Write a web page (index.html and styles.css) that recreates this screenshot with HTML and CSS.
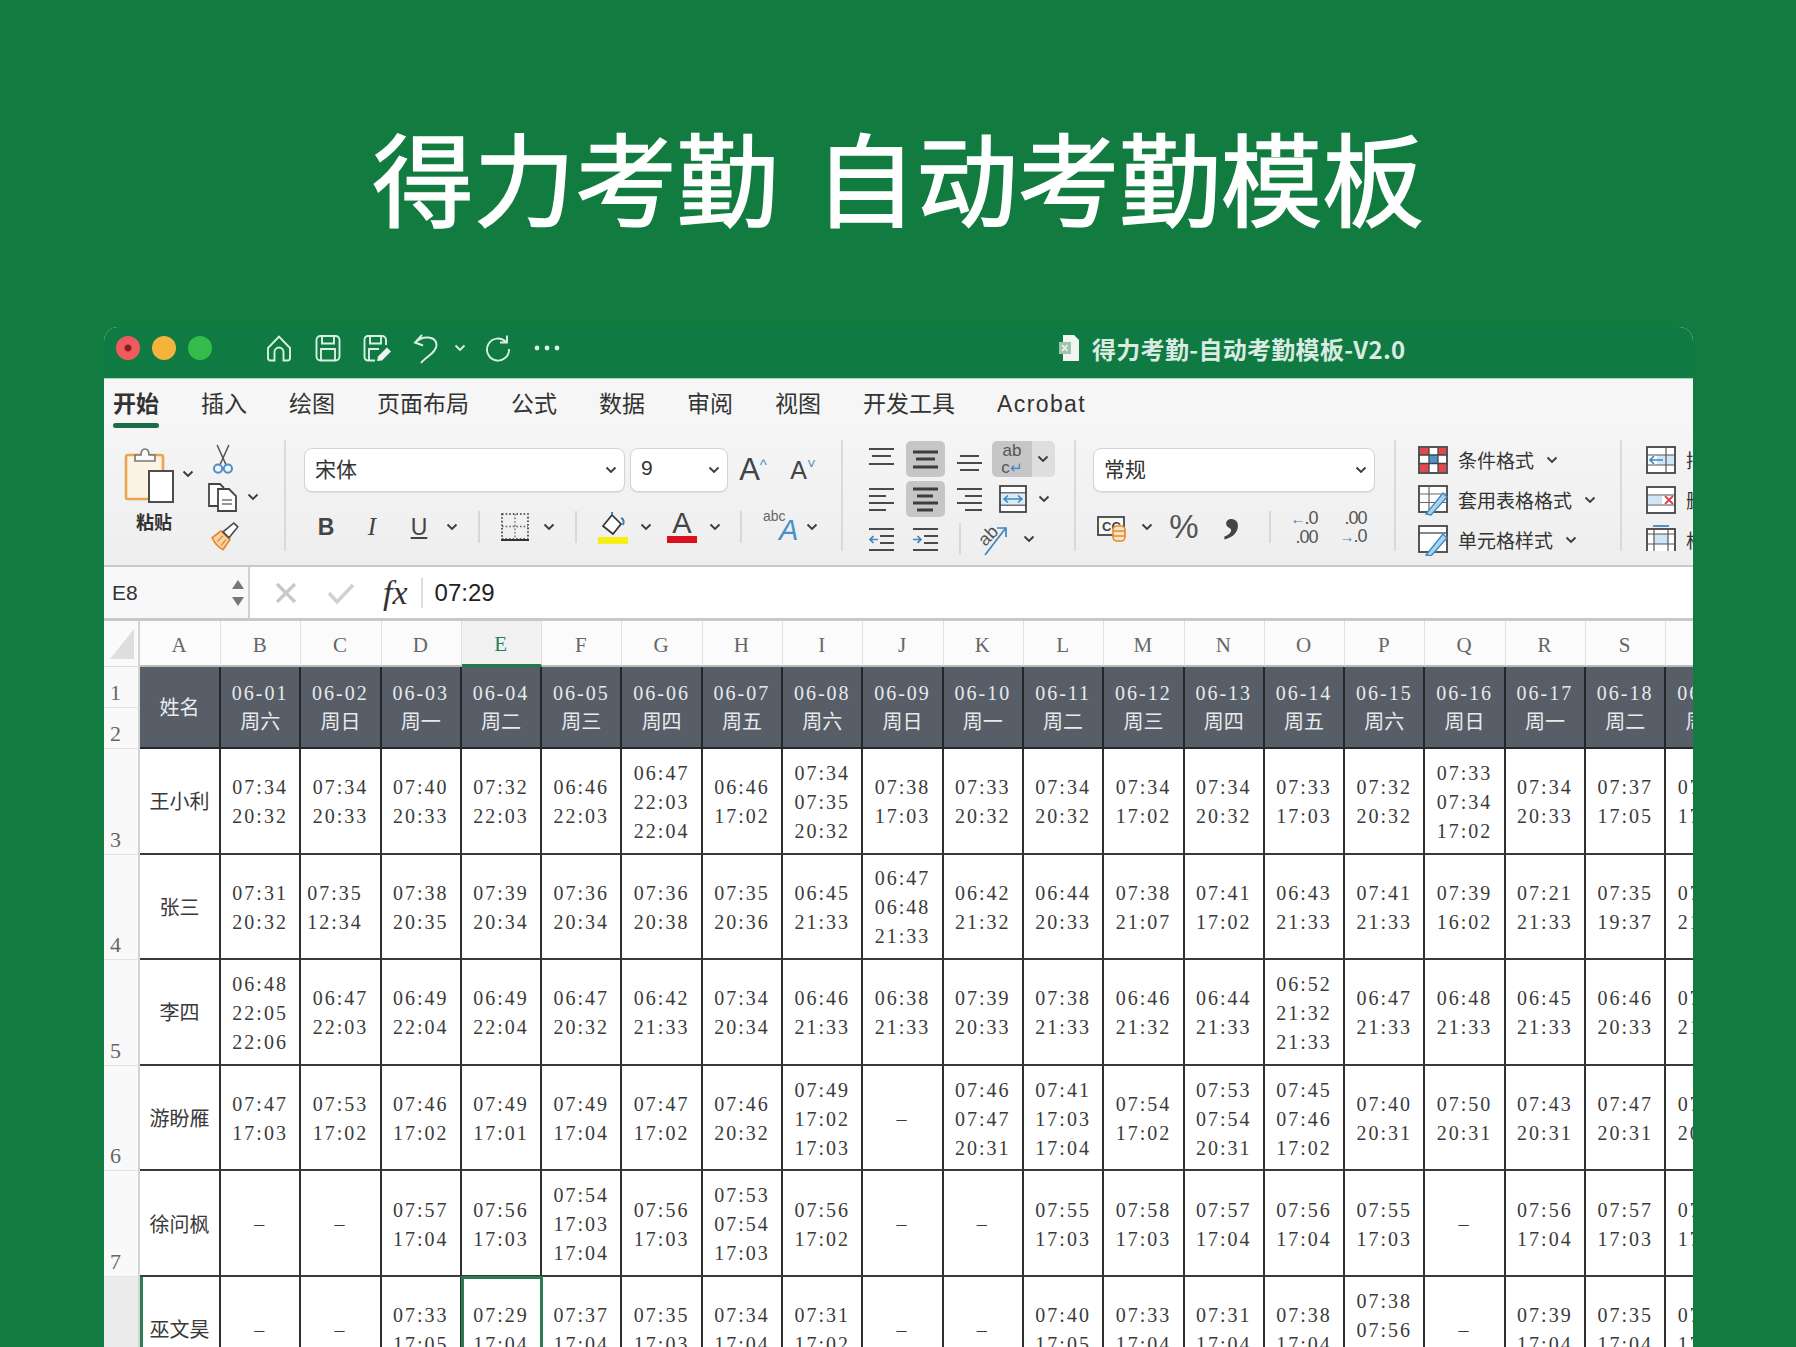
FILE: index.html
```html
<!DOCTYPE html>
<html lang="zh-CN">
<head>
  <meta charset="UTF-8">
  <title>得力考勤 自动考勤模板</title>
  <link rel="stylesheet" href="styles.css">
</head>
<body>

  <h1 class="headline">得力考勤 自动考勤模板</h1>

  <!-- shared small icons -->
  <svg class="sprite" width="0" height="0">
    <symbol id="chev" viewBox="0 0 12 8"><path d="M1.5 1.5 L6 6 L10.5 1.5" fill="none" stroke="#3c3c3c" stroke-width="1.9"/></symbol>
  </svg>

  <div class="window">

    <div class="titlebar">
      <div class="lights">
        <span class="light red"></span>
        <span class="light amber"></span>
        <span class="light green"></span>
      </div>
      <div class="quick">
        <svg width="28" height="30" viewBox="0 0 28 30"><path d="M3 15 L14 3.5 L25 15 V25 a2.5 2.5 0 0 1-2.500 2.500 H18.500 V19 a4.500 4.500 0 0 0-9 0 V27.500 H5.500 a2.500 2.500 0 0 1-2.500-2.500 Z"/></svg>
        <svg width="28" height="30" viewBox="0 0 28 30"><rect x="2.500" y="3" width="23" height="24.500" rx="4"/><path d="M8 3 V10.500 H20 V3 M7 27.500 V16 H21 V27.500"/></svg>
        <svg width="30" height="30" viewBox="0 0 30 30"><path d="M13 27.500 H6 a3.500 3.500 0 0 1-3.500-3.500 V6.500 A3.500 3.500 0 0 1 6 3 H20 a4 4 0 0 1 4 4 V12 M8 3 V10.500 H19 V3 M7 27.500 V16 H17"/><path class="solid" d="M15 28 L16 23.500 L25 14.500 L29 18.500 L20 27.500 Z"/></svg>
        <svg width="28" height="32" viewBox="0 0 28 32"><path d="M10 3 L3 10.500 L11 13.500 M3 10.500 C11 3 24 4 24.500 13 C25 20 14 25 9 31"/></svg>
        <svg class="quick-chev" width="12" height="8" viewBox="0 0 12 8"><path d="M1.500 1.500 L6 6 L10.500 1.500"/></svg>
        <svg width="28" height="30" viewBox="0 0 28 30"><path d="M22 9 A11 11 0 1 0 25 16 M23 2.500 V9.500 H16"/></svg>
        <svg class="dots" width="26" height="6" viewBox="0 0 26 6"><circle cx="3" cy="3" r="2.400"/><circle cx="13" cy="3" r="2.400"/><circle cx="23" cy="3" r="2.400"/></svg>
      </div>
      <div class="doc-title">
        <svg width="22" height="28" viewBox="0 0 22 28"><path d="M5 1 H16 L21 6 V27 H5 Z" fill="#f2f6f3"/><rect x="1" y="8" width="12" height="12" fill="#9fc4ae"/><path d="M4 11 L9.500 17 M9.500 11 L4 17" stroke="#f2f6f3" stroke-width="1.500"/></svg>
        <span>得力考勤-自动考勤模板-V2.0</span>
      </div>
    </div>

    <nav class="tabs">
      <a class="tab active">开始</a>
      <a class="tab">插入</a>
      <a class="tab">绘图</a>
      <a class="tab">页面布局</a>
      <a class="tab">公式</a>
      <a class="tab">数据</a>
      <a class="tab">审阅</a>
      <a class="tab">视图</a>
      <a class="tab">开发工具</a>
      <a class="tab">Acrobat</a>
    </nav>

    <div class="ribbon">

      <!-- 剪贴板 -->
      <section class="group clip">
        <div class="paste">
          <div class="paste-top">
            <svg width="60" height="60" viewBox="0 0 60 60">
              <rect x="6" y="11" width="37" height="44" rx="2" fill="#fdf3e4" stroke="#e8a650" stroke-width="2.600"/>
              <path d="M15 17 V11 H21 C21 3 29 3 29 11 H35 V17 Z" fill="#fafafa" stroke="#777" stroke-width="1.600"/>
              <rect x="29" y="27" width="24" height="31" fill="#fff" stroke="#4d4d4d" stroke-width="2"/>
            </svg>
            <svg class="chev" width="12" height="8"><use href="#chev"/></svg>
          </div>
          <span class="paste-label">粘贴</span>
        </div>
        <div class="clip-tools">
          <svg class="scissors" width="24" height="32" viewBox="0 0 24 32"><path d="M6 1 L15 21 M18 1 L9 21" fill="none" stroke="#555" stroke-width="1.500"/><circle cx="7" cy="25" r="4.200" fill="none" stroke="#4b8fc9" stroke-width="2"/><circle cx="17" cy="25" r="4.200" fill="none" stroke="#4b8fc9" stroke-width="2"/></svg>
          <div class="clip-copy">
            <svg width="32" height="30" viewBox="0 0 32 30"><path d="M11 24 H2 V2 H13 L17 6" fill="#fff" stroke="#444" stroke-width="1.800"/><path d="M11 7 H22 L29 14 V29 H11 Z" fill="#fff" stroke="#444" stroke-width="1.800"/><path d="M15 18 H25 M15 22 H25" stroke="#777" stroke-width="1.400"/></svg>
            <svg class="chev" width="12" height="8"><use href="#chev"/></svg>
          </div>
          <svg class="brush" width="30" height="30" viewBox="0 0 30 30"><path d="M2 17 L11 10 L20 19 L13 29 C9 27 4 22 2 17 Z" fill="#f6d3a4" stroke="#e58a2e" stroke-width="1.800"/><path d="M7 21 L13 15 M11 25 L16 19" stroke="#e58a2e" stroke-width="1.300"/><path d="M13 11 L24 2 L28 6 L19 17 Z" fill="#fff" stroke="#444" stroke-width="1.600"/></svg>
        </div>
      </section>

      <!-- 字体 -->
      <section class="group font">
        <div class="font-top">
          <div class="select font-name"><span>宋体</span><svg class="chev" width="12" height="8"><use href="#chev"/></svg></div>
          <div class="select font-size"><span>9</span><svg class="chev" width="12" height="8"><use href="#chev"/></svg></div>
          <div class="grow-btn">A<sup>^</sup></div>
          <div class="grow-btn small">A<sup>˅</sup></div>
        </div>
        <div class="font-tools">
          <b class="fmt bold">B</b>
          <i class="fmt italic">I</i>
          <u class="fmt under">U</u>
          <svg class="chev" width="12" height="8"><use href="#chev"/></svg>
          <span class="vsep"></span>
          <svg width="30" height="30" viewBox="0 0 30 30"><rect x="2" y="2" width="26" height="25" fill="none" stroke="#333" stroke-width="1.600" stroke-dasharray="1.600 2"/><path d="M15 2 V27 M2 14.500 H28" stroke="#666" stroke-width="1.300" stroke-dasharray="1.600 2"/><path d="M1 28 H29" stroke="#333" stroke-width="2"/></svg>
          <svg class="chev" width="12" height="8"><use href="#chev"/></svg>
          <span class="vsep"></span>
          <div class="swatched">
            <svg width="28" height="26" viewBox="0 0 28 26"><path d="M4 15 L13 4 L22 13 L14 23 Z" fill="#fff" stroke="#333" stroke-width="1.700"/><path d="M13 4 V1 M22 7 C25 8 25 11 24 14" fill="none" stroke="#3b7fb8" stroke-width="2"/></svg>
            <span class="swatch yellow"></span>
          </div>
          <svg class="chev" width="12" height="8"><use href="#chev"/></svg>
          <div class="swatched">
            <span class="font-color">A</span>
            <span class="swatch crimson"></span>
          </div>
          <svg class="chev" width="12" height="8"><use href="#chev"/></svg>
          <span class="vsep"></span>
          <div class="phonetic"><small>abc</small><span>A</span></div>
          <svg class="chev" width="12" height="8"><use href="#chev"/></svg>
        </div>
      </section>

      <!-- 对齐 -->
      <section class="group align">
        <div class="align-grid">
          <div class="cell-btn"><svg width="26" height="26" viewBox="0 0 26 26"><path d="M1 3 H26 M4 10 H23 M1 18 H26"/></svg></div>
          <div class="cell-btn on"><svg width="26" height="26" viewBox="0 0 26 26"><path d="M1 6 H26 M4 13 H23 M1 21 H26"/></svg></div>
          <div class="cell-btn"><svg width="26" height="26" viewBox="0 0 26 26"><path d="M4 10 H23 M1 17 H26 M4 24 H23"/></svg></div>
          <div class="wrap-btn">
            <span class="wrap-ico">ab<br>c<em>↵</em></span>
            <svg class="chev" width="12" height="8"><use href="#chev"/></svg>
          </div>
          <div class="cell-btn"><svg width="26" height="26" viewBox="0 0 26 26"><path d="M1 3 H26 M1 10 H18 M1 17 H26 M1 24 H18"/></svg></div>
          <div class="cell-btn on"><svg width="26" height="26" viewBox="0 0 26 26"><path d="M1 3 H26 M5 10 H21 M1 17 H26 M5 24 H21"/></svg></div>
          <div class="cell-btn"><svg width="26" height="26" viewBox="0 0 26 26"><path d="M1 3 H26 M9 10 H26 M1 17 H26 M9 24 H26"/></svg></div>
          <div class="merge-btn">
            <svg width="28" height="28" viewBox="0 0 28 28"><rect x="1" y="1" width="26" height="26" fill="#fff" stroke="#444" stroke-width="1.800"/><path d="M1 8 H27 M1 20 H27" stroke="#444" stroke-width="1.500"/><rect x="2" y="8.500" width="24" height="11" fill="#d9ecf8"/><path d="M5 14 H23 M9 10.500 L5 14 L9 17.500 M19 10.500 L23 14 L19 17.500" fill="none" stroke="#3b86c2" stroke-width="1.500"/></svg>
            <svg class="chev" width="12" height="8"><use href="#chev"/></svg>
          </div>
          <div class="cell-btn"><svg width="26" height="26" viewBox="0 0 26 26"><path d="M1 3 H26 M12 10 H26 M12 17 H26 M1 24 H26"/><path class="arrow" d="M10 13.500 H2 M5.500 10 L2 13.500 L5.500 17"/></svg></div>
          <div class="cell-btn"><svg width="26" height="26" viewBox="0 0 26 26"><path d="M1 3 H26 M12 10 H26 M12 17 H26 M1 24 H26"/><path class="arrow" d="M1 13.500 H9 M5.500 10 L9 13.500 L5.500 17"/></svg></div>
          <div class="orient-btn">
            <span class="vsep"></span>
            <svg width="36" height="36" viewBox="0 0 36 36"><text x="3" y="21" transform="rotate(-45 12 16)" class="orient-txt">ab</text><path d="M9 34 L29 8 M21 7 H30 V16" fill="none" stroke="#3b86c2" stroke-width="1.700"/></svg>
            <svg class="chev" width="12" height="8"><use href="#chev"/></svg>
          </div>
        </div>
      </section>

      <!-- 数字 -->
      <section class="group number">
        <div class="select num-format"><span>常规</span><svg class="chev" width="12" height="8"><use href="#chev"/></svg></div>
        <div class="number-tools">
          <svg width="32" height="32" viewBox="0 0 32 32"><rect x="2" y="6" width="26" height="18" fill="#f7f7f7" stroke="#444" stroke-width="1.800"/><text x="6" y="20" class="money-txt">CC</text><rect x="17" y="15" width="12" height="15" rx="4" fill="#fbe3c6" stroke="#e58a2e" stroke-width="1.600"/><path d="M17 20 H29 M17 25 H29" stroke="#e58a2e" stroke-width="1.300"/></svg>
          <svg class="chev" width="12" height="8"><use href="#chev"/></svg>
          <span class="percent">%</span>
          <span class="comma">,</span>
          <span class="vsep"></span>
          <div class="decimal"><span><em>←</em>.0</span><span>.00</span></div>
          <div class="decimal"><span>.00</span><span><em>→</em>.0</span></div>
        </div>
      </section>

      <!-- 样式 -->
      <section class="group styles">
        <div class="style-row">
          <svg width="30" height="30" viewBox="0 0 30 30"><rect x="1" y="2" width="28" height="26" fill="#fff" stroke="#444" stroke-width="1.800"/><rect x="2" y="3" width="9" height="7" fill="#e04a4f"/><rect x="20" y="3" width="8" height="7" fill="#e04a4f"/><rect x="11" y="10" width="9" height="8" fill="#4f93cf"/><rect x="2" y="19" width="9" height="8" fill="#e04a4f"/><rect x="20" y="19" width="8" height="8" fill="#e04a4f"/><path d="M11 2 V28 M20 2 V28 M1 10 H29 M1 18.500 H29" stroke="#444" stroke-width="1.300"/></svg>
          <span>条件格式</span>
          <svg class="chev" width="12" height="8"><use href="#chev"/></svg>
        </div>
        <div class="style-row">
          <svg width="30" height="32" viewBox="0 0 30 32"><rect x="1" y="2" width="28" height="26" fill="#fff" stroke="#444" stroke-width="1.800"/><path d="M1 10 H29 M1 18.500 H29 M11 2 V28" stroke="#666" stroke-width="1.200"/><path d="M8 30 L25 9 L29 13 L13 31 Z" fill="#a9d3ee" stroke="#3b86c2" stroke-width="1.300"/></svg>
          <span>套用表格格式</span>
          <svg class="chev" width="12" height="8"><use href="#chev"/></svg>
        </div>
        <div class="style-row">
          <svg width="30" height="32" viewBox="0 0 30 32"><rect x="1" y="2" width="28" height="26" fill="#fff" stroke="#444" stroke-width="1.800"/><path d="M1 9 H29" stroke="#444" stroke-width="1.300"/><path d="M8 31 L25 10 L29 14 L13 32 Z" fill="#a9d3ee" stroke="#3b86c2" stroke-width="1.300"/></svg>
          <span>单元格样式</span>
          <svg class="chev" width="12" height="8"><use href="#chev"/></svg>
        </div>
      </section>

      <!-- 单元格 -->
      <section class="group cells">
        <div class="style-row">
          <svg width="30" height="30" viewBox="0 0 30 30"><rect x="1" y="2" width="28" height="26" fill="#fff" stroke="#444" stroke-width="1.800"/><rect x="11" y="10" width="17" height="10" fill="#cfe6f6"/><path d="M1 10 H29 M1 20 H29 M20 2 V28" stroke="#555" stroke-width="1.200"/><path d="M17 15 H4 M8 11 L4 15 L8 19" fill="none" stroke="#3b86c2" stroke-width="1.600"/></svg>
          <span>插入</span>
        </div>
        <div class="style-row">
          <svg width="30" height="30" viewBox="0 0 30 30"><rect x="1" y="2" width="28" height="26" fill="#fff" stroke="#444" stroke-width="1.800"/><path d="M1 10 H29 M1 20 H29" stroke="#555" stroke-width="1.200"/><rect x="2" y="11" width="14" height="8" fill="#cfe6f6"/><path d="M19 11 L27 19 M27 11 L19 19" stroke="#d8434a" stroke-width="1.800"/></svg>
          <span>删除</span>
        </div>
        <div class="style-row">
          <svg width="30" height="32" viewBox="0 0 30 32"><rect x="1" y="5" width="28" height="25" fill="#fff" stroke="#444" stroke-width="1.800"/><rect x="8" y="10" width="14" height="10" fill="#cfe6f6"/><path d="M1 20 H29 M8 5 V30 M22 5 V30 M1 10 H29" stroke="#555" stroke-width="1.200"/><path d="M7 2 H23" stroke="#3b86c2" stroke-width="1.800"/></svg>
          <span>格式</span>
        </div>
      </section>
    </div>

    <div class="formula">
      <div class="namebox">
        <span>E8</span>
        <div class="stepper"><i class="up"></i><i class="down"></i></div>
      </div>
      <div class="fbar">
        <svg width="24" height="24" viewBox="0 0 24 24"><path d="M3 3 L21 21 M21 3 L3 21" stroke="#c9c9c9" stroke-width="3.400"/></svg>
        <svg width="28" height="24" viewBox="0 0 28 24"><path d="M2 12 L10 21 L26 4" fill="none" stroke="#cfcfcf" stroke-width="3.400"/></svg>
        <span class="fx">fx</span>
        <span class="fsep"></span>
        <span class="fvalue">07:29</span>
      </div>
    </div>

    <div class="sheet">
      <!-- column letters -->
      <div class="corner"><span></span></div>
      <div class="colh">A</div><div class="colh">B</div><div class="colh">C</div><div class="colh">D</div><div class="colh cur">E</div><div class="colh">F</div><div class="colh">G</div><div class="colh">H</div><div class="colh">I</div><div class="colh">J</div><div class="colh">K</div><div class="colh">L</div><div class="colh">M</div><div class="colh">N</div><div class="colh">O</div><div class="colh">P</div><div class="colh">Q</div><div class="colh">R</div><div class="colh">S</div><div class="colh">T</div>

      <!-- rows 1-2 -->
      <div class="rowh">1</div>
      <div class="hd name">姓名</div>
      <div class="hd">06-01<span>周六</span></div>
      <div class="hd">06-02<span>周日</span></div>
      <div class="hd">06-03<span>周一</span></div>
      <div class="hd">06-04<span>周二</span></div>
      <div class="hd">06-05<span>周三</span></div>
      <div class="hd">06-06<span>周四</span></div>
      <div class="hd">06-07<span>周五</span></div>
      <div class="hd">06-08<span>周六</span></div>
      <div class="hd">06-09<span>周日</span></div>
      <div class="hd">06-10<span>周一</span></div>
      <div class="hd">06-11<span>周二</span></div>
      <div class="hd">06-12<span>周三</span></div>
      <div class="hd">06-13<span>周四</span></div>
      <div class="hd">06-14<span>周五</span></div>
      <div class="hd">06-15<span>周六</span></div>
      <div class="hd">06-16<span>周日</span></div>
      <div class="hd">06-17<span>周一</span></div>
      <div class="hd">06-18<span>周二</span></div>
      <div class="hd">06-19<span>周三</span></div>
      <div class="rowh">2</div>

      <!-- row 3 -->
      <div class="rowh">3</div>
      <div class="c name">王小利</div>
      <div class="c">07:34<br>20:32</div><div class="c">07:34<br>20:33</div><div class="c">07:40<br>20:33</div><div class="c">07:32<br>22:03</div><div class="c">06:46<br>22:03</div><div class="c">06:47<br>22:03<br>22:04</div><div class="c">06:46<br>17:02</div><div class="c">07:34<br>07:35<br>20:32</div><div class="c">07:38<br>17:03</div><div class="c">07:33<br>20:32</div><div class="c">07:34<br>20:32</div><div class="c">07:34<br>17:02</div><div class="c">07:34<br>20:32</div><div class="c">07:33<br>17:03</div><div class="c">07:32<br>20:32</div><div class="c">07:33<br>07:34<br>17:02</div><div class="c">07:34<br>20:33</div><div class="c">07:37<br>17:05</div><div class="c">07:34<br>17:02</div>

      <!-- row 4 -->
      <div class="rowh">4</div>
      <div class="c name">张三</div>
      <div class="c">07:31<br>20:32</div><div class="c off">07:35<br>12:34</div><div class="c">07:38<br>20:35</div><div class="c">07:39<br>20:34</div><div class="c">07:36<br>20:34</div><div class="c">07:36<br>20:38</div><div class="c">07:35<br>20:36</div><div class="c">06:45<br>21:33</div><div class="c">06:47<br>06:48<br>21:33</div><div class="c">06:42<br>21:32</div><div class="c">06:44<br>20:33</div><div class="c">07:38<br>21:07</div><div class="c">07:41<br>17:02</div><div class="c">06:43<br>21:33</div><div class="c">07:41<br>21:33</div><div class="c">07:39<br>16:02</div><div class="c">07:21<br>21:33</div><div class="c">07:35<br>19:37</div><div class="c">07:35<br>21:33</div>

      <!-- row 5 -->
      <div class="rowh">5</div>
      <div class="c name">李四</div>
      <div class="c">06:48<br>22:05<br>22:06</div><div class="c">06:47<br>22:03</div><div class="c">06:49<br>22:04</div><div class="c">06:49<br>22:04</div><div class="c">06:47<br>20:32</div><div class="c">06:42<br>21:33</div><div class="c">07:34<br>20:34</div><div class="c">06:46<br>21:33</div><div class="c">06:38<br>21:33</div><div class="c">07:39<br>20:33</div><div class="c">07:38<br>21:33</div><div class="c">06:46<br>21:32</div><div class="c">06:44<br>21:33</div><div class="c">06:52<br>21:32<br>21:33</div><div class="c">06:47<br>21:33</div><div class="c">06:48<br>21:33</div><div class="c">06:45<br>21:33</div><div class="c">06:46<br>20:33</div><div class="c">07:38<br>21:33</div>

      <!-- row 6 -->
      <div class="rowh">6</div>
      <div class="c name">游盼雁</div>
      <div class="c">07:47<br>17:03</div><div class="c">07:53<br>17:02</div><div class="c">07:46<br>17:02</div><div class="c">07:49<br>17:01</div><div class="c">07:49<br>17:04</div><div class="c">07:47<br>17:02</div><div class="c">07:46<br>20:32</div><div class="c">07:49<br>17:02<br>17:03</div><div class="c">–</div><div class="c">07:46<br>07:47<br>20:31</div><div class="c">07:41<br>17:03<br>17:04</div><div class="c">07:54<br>17:02</div><div class="c">07:53<br>07:54<br>20:31</div><div class="c">07:45<br>07:46<br>17:02</div><div class="c">07:40<br>20:31</div><div class="c">07:50<br>20:31</div><div class="c">07:43<br>20:31</div><div class="c">07:47<br>20:31</div><div class="c">07:47<br>20:31</div>

      <!-- row 7 -->
      <div class="rowh">7</div>
      <div class="c name">徐问枫</div>
      <div class="c">–</div><div class="c">–</div><div class="c">07:57<br>17:04</div><div class="c">07:56<br>17:03</div><div class="c">07:54<br>17:03<br>17:04</div><div class="c">07:56<br>17:03</div><div class="c">07:53<br>07:54<br>17:03</div><div class="c">07:56<br>17:02</div><div class="c">–</div><div class="c">–</div><div class="c">07:55<br>17:03</div><div class="c">07:58<br>17:03</div><div class="c">07:57<br>17:04</div><div class="c">07:56<br>17:04</div><div class="c">07:55<br>17:03</div><div class="c">–</div><div class="c">07:56<br>17:04</div><div class="c">07:57<br>17:03</div><div class="c">07:56<br>17:04</div>

      <!-- row 8 -->
      <div class="rowh cur">8</div>
      <div class="c name first">巫文昊</div>
      <div class="c">–</div><div class="c">–</div><div class="c">07:33<br>17:05</div><div class="c sel">07:29<br>17:04</div><div class="c">07:37<br>17:04</div><div class="c">07:35<br>17:03</div><div class="c">07:34<br>17:04</div><div class="c">07:31<br>17:02</div><div class="c">–</div><div class="c">–</div><div class="c">07:40<br>17:05</div><div class="c">07:33<br>17:04</div><div class="c">07:31<br>17:04</div><div class="c">07:38<br>17:04</div><div class="c">07:38<br>07:56<br>17:04</div><div class="c">–</div><div class="c">07:39<br>17:04</div><div class="c">07:35<br>17:04</div><div class="c">07:36<br>17:04</div>
    </div>
  </div>

</body>
</html>
```

FILE: styles.css
```css
/* ========== page ========== */
html, body {
  height: 100%;
}
body {
  margin: 0;
  background: #127b40;
  font-family: "Liberation Sans", "Noto Sans CJK SC", sans-serif;
  color: #333;
  display: flex;
  flex-direction: column;
  overflow: hidden;
}
.sprite {
  position: absolute;
}
.headline {
  margin: 0;
  height: 327px;
  padding-top: 115px;
  box-sizing: border-box;
  text-align: center;
  font-family: "Noto Sans CJK SC", sans-serif;
  font-size: 101.500px;
  line-height: 120px;
  font-weight: 400;
  -webkit-text-stroke: 1.600px #fff;
  color: #fff;
  word-spacing: 14px;
}

/* ========== window ========== */
.window {
  margin-left: 104px;
  width: 1589px;
  flex: 1;
  min-height: 0;
  overflow: hidden;
  border-radius: 14px 14px 0 0;
  background: #fff;
}
.titlebar {
  height: 51px;
  padding-bottom: 9px;
  box-sizing: border-box;
  background: #0f7a42;
  display: flex;
  align-items: center;
  padding-left: 12px;
}
.lights {
  display: flex;
  gap: 12px;
}
.light {
  width: 24px;
  height: 24px;
  border-radius: 50%;
}
.light.red {
  background: radial-gradient(circle, #8e1b20 0 3px, #ef5a5c 4px);
}
.light.amber {
  background: #f3b33d;
}
.light.green {
  background: #33bb4c;
}
.quick {
  display: grid;
  grid-template-columns: 49px 49px 49px 50px 18px 58px 40px;
  justify-items: center;
  align-items: center;
  margin-left: 42px;
}
.quick svg path,
.quick svg rect {
  fill: none;
  stroke: #dcefe4;
  stroke-width: 1.900;
}
.quick svg path.solid {
  fill: #eef6f1;
  stroke: none;
}
.quick .dots circle {
  fill: #dcefe4;
}
.doc-title {
  display: flex;
  align-items: center;
  gap: 8px;
  margin-left: 491px;
  font-family: "Noto Sans CJK SC", sans-serif;
  font-size: 24px;
  font-weight: 700;
  letter-spacing: .3px;
  color: #dcebe2;
}
.doc-title span {
  margin-left: 4px;
}

/* ========== tabs ========== */
.tabs {
  height: 52px;
  background: #f6f6f6;
  border-top: 1px solid #a9d6bb;
  box-sizing: border-box;
  display: flex;
  gap: 42px;
  padding: 10px 0 0 9px;
  font-size: 23px;
  line-height: 30px;
  color: #333;
}
.tab {
  position: relative;
  white-space: nowrap;
}
.tab:last-child {
  letter-spacing: 1.400px;
}
.tab.active {
  font-weight: 700;
}
.tab.active::after {
  content: "";
  display: block;
  height: 5px;
  margin-top: 4px;
  border-radius: 3px;
  background: #1b6e4a;
}

/* ========== ribbon ========== */
.ribbon {
  height: 137px;
  padding-top: 10px;
  box-sizing: border-box;
  background: linear-gradient(#f5f5f5, #eeeeee);
  border-bottom: 2px solid #c9c9c9;
  display: flex;
  font-size: 21px;
}
.group {
  height: 111px;
  box-sizing: border-box;
  border-left: 2px solid #dadada;
  flex: none;
}
.chev {
  display: block;
  flex: none;
}
.vsep {
  display: block;
  width: 2px;
  height: 32px;
  background: #d8d8d8;
}

/* clipboard */
.clip {
  width: 180px;
  border-left: 0;
  display: flex;
}
.paste {
  width: 100px;
  padding-left: 16px;
  box-sizing: border-box;
  margin-top: 4px;
}
.paste-top {
  display: flex;
  align-items: center;
  gap: 2px;
}
.paste-label {
  display: block;
  width: 68px;
  margin-top: 7px;
  text-align: center;
  font-size: 18px;
  line-height: 24px;
  font-weight: 700;
}
.clip-tools {
  width: 60px;
  margin-top: 4px;
  display: flex;
  flex-direction: column;
  gap: 7px;
  padding-left: 3px;
}
.clip-tools > svg {
  display: block;
}
.clip-tools .scissors {
  margin-left: 4px;
}
.clip-tools .brush {
  margin: 2px 0 0 3px;
}
.clip-copy {
  display: flex;
  align-items: center;
  gap: 8px;
}

/* font */
.font {
  width: 557px;
  padding: 8px 0 0 18px;
}
.font-top {
  display: flex;
  align-items: center;
}
.select {
  height: 44px;
  box-sizing: border-box;
  background: #fff;
  border: 1px solid #d4d4d4;
  border-radius: 8px;
  display: flex;
  align-items: center;
  justify-content: space-between;
  padding: 0 7px 4px 10px;
  box-shadow: 0 1px 1px rgba(0,0,0,0.08);
}
.select .chev {
  margin-top: 4px;
}
.font-name {
  width: 321px;
}
.font-size {
  width: 98px;
  margin-left: 5px;
}
.grow-btn {
  width: 50px;
  text-align: center;
  font-size: 31px;
  font-weight: 300;
  color: #444;
  line-height: 40px;
}
.grow-btn.small {
  font-size: 25px;
}
.grow-btn sup {
  font-size: 15px;
  color: #4b8fc9;
  vertical-align: 10px;
  line-height: 0;
}
.font-tools {
  display: grid;
  grid-template-columns: 44px 48px 46px 20px 34px 38px 30px 24px 50px 16px 56px 10px 42px 32px 36px;
  grid-template-rows: 40px;
  justify-items: center;
  align-items: center;
  margin-top: 15px;
}
.fmt {
  font-family: "Liberation Sans", sans-serif;
  font-size: 23px;
  color: #444;
}
.fmt.italic {
  font-family: "Liberation Serif", serif;
  font-size: 25px;
}
.fmt.under {
  font-weight: 300;
}
.swatched {
  display: flex;
  flex-direction: column;
  align-items: center;
}
.font-color {
  font-size: 29px;
  line-height: 25px;
  color: #444;
}
.swatch {
  display: block;
  width: 30px;
  height: 7px;
}
.swatch.yellow {
  background: #f7ee1a;
}
.swatch.crimson {
  background: #dc0f1e;
}
.phonetic {
  position: relative;
  width: 34px;
  height: 36px;
}
.phonetic small {
  position: absolute;
  left: 2px;
  top: -1px;
  font-size: 14px;
  color: #666;
}
.phonetic span {
  position: absolute;
  left: 18px;
  top: 5px;
  font-size: 29px;
  line-height: 32px;
  font-style: italic;
  color: #4a90c8;
}

/* alignment */
.align {
  width: 233px;
  padding-left: 16px;
}
.align-grid {
  display: grid;
  grid-template-columns: 44px 44px 44px 65px;
  grid-template-rows: 40px 40px 40px;
  margin-top: -1px;
  align-items: center;
  justify-items: center;
}
.cell-btn {
  width: 39px;
  height: 36px;
  border-radius: 5px;
  display: flex;
  align-items: center;
  justify-content: center;
}
.cell-btn.on {
  background: #c6c6c6;
}
.cell-btn path {
  fill: none;
  stroke: #4a4a4a;
  stroke-width: 2.200;
}
.cell-btn.on path {
  stroke: #3d3d3d;
  stroke-width: 2.800;
}
.cell-btn path.arrow {
  stroke: #3b86c2;
  stroke-width: 1.700;
}
.wrap-btn {
  width: 63px;
  height: 36px;
  border-radius: 5px;
  display: flex;
  align-items: center;
  justify-content: space-between;
  padding-right: 6px;
  box-sizing: border-box;
  background: linear-gradient(90deg, #c6c6c6 40px, #dedede 40px);
}
.wrap-ico {
  width: 40px;
  text-align: center;
  font-size: 17px;
  line-height: 17px;
  color: #555;
}
.wrap-ico em {
  font-style: normal;
  font-size: 15px;
  color: #3b86c2;
}
.merge-btn {
  width: 63px;
  display: flex;
  align-items: center;
  gap: 11px;
  padding-left: 7px;
  box-sizing: border-box;
}
.orient-btn {
  grid-column: 3 / 5;
  justify-self: start;
  display: flex;
  align-items: center;
  gap: 15px;
  margin-left: 12px;
}
.orient-btn .chev {
  margin-left: -4px;
}
.orient-txt {
  font-size: 18px;
  fill: #555;
}

/* number */
.number {
  width: 320px;
  padding: 8px 0 0 17px;
}
.num-format {
  width: 282px;
}
.number-tools {
  display: grid;
  grid-template-columns: 46px 24px 50px 46px 30px 38px 60px;
  grid-template-rows: 40px;
  align-items: center;
  justify-items: center;
  margin-top: 15px;
  margin-left: -4px;
}
.money-txt {
  font-size: 13px;
  fill: #444;
  font-weight: 700;
}
.percent {
  font-size: 33px;
  font-weight: 300;
  color: #555;
}
.comma {
  font-family: "Liberation Serif", serif;
  font-size: 68px;
  font-weight: 700;
  line-height: 30px;
  margin-top: -42px;
  color: #444;
}
.decimal {
  font-family: "Liberation Sans", sans-serif;
  font-size: 18px;
  line-height: 18px;
  letter-spacing: -1px;
  color: #555;
  text-align: right;
}
.decimal span {
  display: block;
}
.decimal em {
  font-style: normal;
  font-size: 15px;
  color: #3b86c2;
}

/* styles */
.styles {
  width: 226px;
  padding-left: 22px;
}
.cells {
  padding-left: 24px;
  width: 73px;
  overflow: hidden;
}
.style-row {
  height: 40px;
  display: flex;
  align-items: center;
  gap: 10px;
  font-size: 19px;
  white-space: nowrap;
  color: #333;
}
.style-row span {
  margin-top: -2px;
}
.style-row svg:first-child {
  flex: none;
}
.style-row .chev {
  margin-left: 2px;
}

/* ========== formula bar ========== */
.formula {
  height: 54px;
  display: flex;
  border-bottom: 3px solid #c8c8c8;
  box-sizing: border-box;
  background: #fff;
}
.namebox {
  width: 146px;
  background: #f8f8f8;
  border-right: 2px solid #d0d0d0;
  box-sizing: border-box;
  display: flex;
  align-items: center;
  justify-content: space-between;
  padding: 0 4px 0 8px;
  font-size: 21px;
}
.stepper {
  display: flex;
  flex-direction: column;
  gap: 8px;
}
.stepper i {
  display: block;
  width: 0;
  height: 0;
  border-left: 6px solid transparent;
  border-right: 6px solid transparent;
}
.stepper .up {
  border-bottom: 9px solid #777;
}
.stepper .down {
  border-top: 9px solid #777;
}
.fbar {
  flex: 1;
  display: flex;
  align-items: center;
  padding-left: 24px;
}
.fbar svg {
  flex: none;
}
.fbar svg + svg {
  margin-left: 29px;
}
.fx {
  margin-left: 28px;
  font-family: "Liberation Serif", serif;
  font-style: italic;
  font-size: 34px;
  color: #333;
}
.fsep {
  width: 2px;
  height: 30px;
  margin-left: 13px;
  background: #ddd;
}
.fvalue {
  margin-left: 12px;
  font-size: 24px;
  color: #222;
}

/* ========== sheet ========== */
.sheet {
  display: grid;
  grid-template-columns: 36px 81px repeat(19, 80.300px);
  grid-template-rows: 46px 41px 41px repeat(6, 105.600px);
  font-family: "Liberation Serif", "Noto Sans CJK SC", serif;
  font-size: 20px;
  color: #3a3a3a;
  width: 1750px;
}
.corner {
  background: #fafafa;
  border-right: 2px solid #d4d4d4;
  border-bottom: 1px solid #ddd;
  box-sizing: border-box;
  padding: 8px 0 0 6px;
}
.corner span {
  display: block;
  width: 24px;
  height: 30px;
  background: #dedede;
  clip-path: polygon(100% 0, 100% 100%, 0 100%);
}
.colh {
  display: flex;
  align-items: center;
  justify-content: center;
  background: #fbfbfb;
  border-right: 1px solid #e0e0e0;
  border-bottom: 2px solid #b9b9b9;
  box-sizing: border-box;
  padding: 4px 2px 0 0;
  color: #666;
  font-size: 21px;
}
.colh.cur {
  background: #f1f1f1;
  color: #2c7d55;
  border-bottom: 3px solid #1f7a4c;
}
.rowh {
  display: flex;
  align-items: flex-end;
  background: #f9f9f9;
  border-right: 2px solid #d4d4d4;
  border-bottom: 1px solid #e2e2e2;
  box-sizing: border-box;
  padding: 0 0 2px 6px;
  color: #666;
  font-size: 22px;
  line-height: 24px;
}
.rowh.cur {
  background: #ececec;
}
.hd {
  grid-row: span 2;
  display: flex;
  flex-direction: column;
  align-items: center;
  justify-content: center;
  background: #575e67;
  color: #e8eaec;
  border-right: 2px solid #23272c;
  border-bottom: 2px solid #23272c;
  box-sizing: border-box;
  line-height: 28px;
  letter-spacing: 2px;
}
.hd span {
  font-family: "Noto Sans CJK SC", sans-serif;
  letter-spacing: 0;
  font-size: 20px;
}
.hd.name {
  font-family: "Noto Sans CJK SC", sans-serif;
  font-size: 20px;
  letter-spacing: 0;
}
.c {
  display: flex;
  align-items: center;
  justify-content: center;
  text-align: center;
  background: #fff;
  border-right: 2px solid #2f2f2f;
  border-bottom: 2px solid #3a3a3a;
  box-sizing: border-box;
  line-height: 29px;
  letter-spacing: 2px;
  padding-top: 3px;
}
.c.off {
  padding-right: 11px;
}
.c.name {
  font-family: "Noto Sans CJK SC", sans-serif;
  font-size: 20px;
  letter-spacing: 0;
  padding: 0;
}
.c.first {
  box-shadow: inset 3px 0 0 #2e7d58;
}
.c.sel {
  outline: 3px solid #2a7a54;
  outline-offset: -2px;
  position: relative;
}
```
